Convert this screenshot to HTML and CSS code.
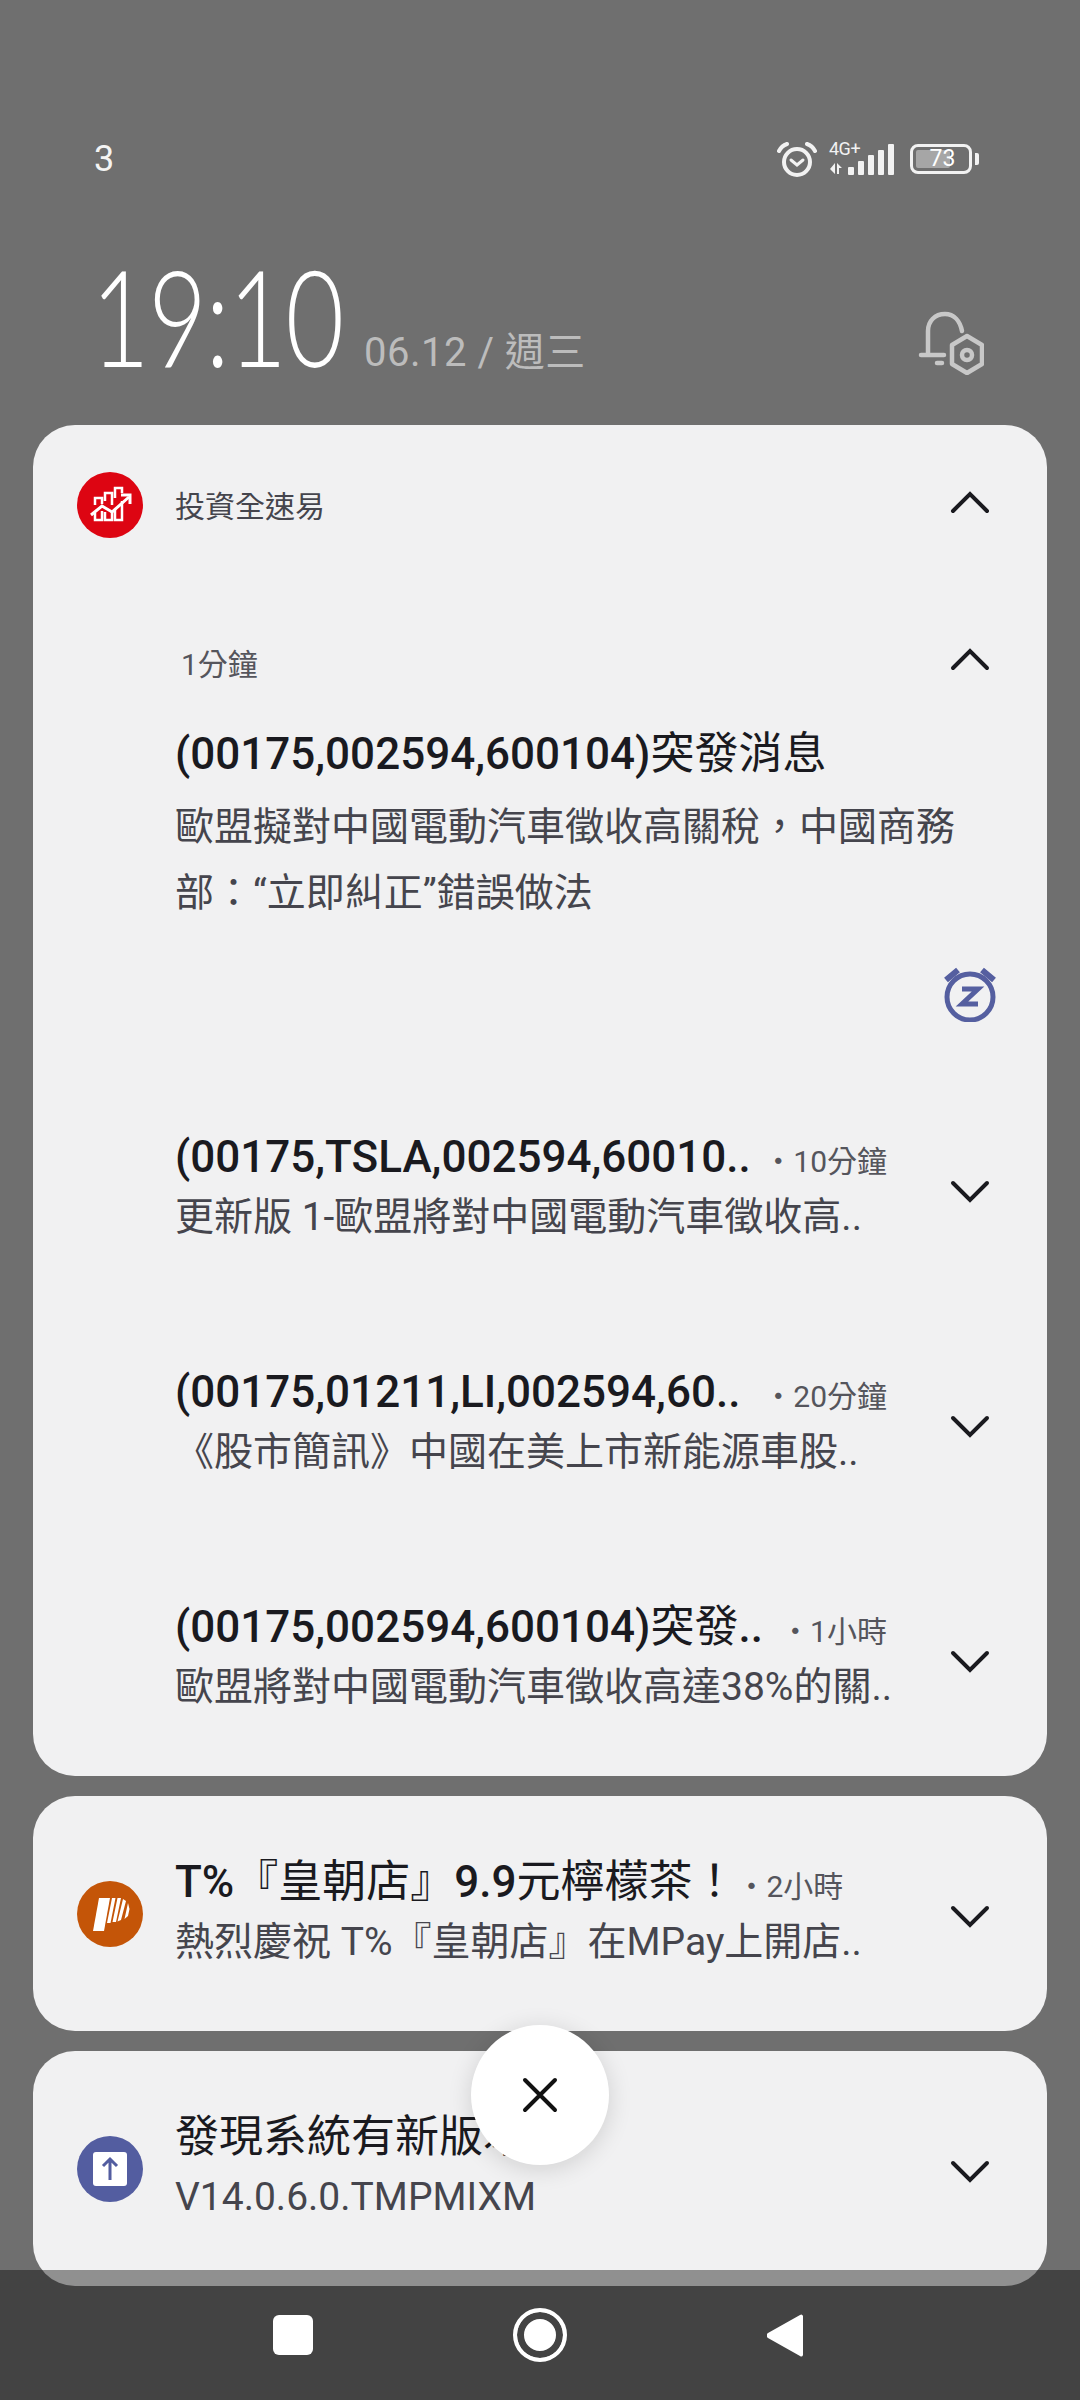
FILE: index.html
```html
<!DOCTYPE html>
<html lang="zh-Hant">
<head>
    <meta charset="UTF-8">
    <title>Notifications</title>
    <link rel="stylesheet" href="styles.css">
</head>
<body>
<div id="shade">
    <div id="statusbar">
        <span class="carrier">3</span>
        <div class="status-icons">
            <svg width="40" height="36" viewBox="0 0 40 36" fill="none" stroke="#f2f2f2" stroke-linecap="round">
                <circle cx="20" cy="21" r="13" stroke-width="4"/>
                <path d="M14 19l6 5 6-5" stroke-width="3"/>
                <path d="M2 10c2-4 5-6 8-7M38 10c-2-4-5-6-8-7" stroke-width="4"/>
            </svg>
            <div class="network">
                <span class="net-label">4G+</span>
                <svg width="66" height="31" viewBox="0 0 66 31" fill="#f2f2f2">
                    <path d="M6 19v11L1 25zM8 19l5 5h-3v6H8z"/>
                    <rect x="19" y="23" width="6" height="8" rx="1"/>
                    <rect x="29" y="17" width="6" height="14" rx="1"/>
                    <rect x="39" y="11" width="6" height="20" rx="1"/>
                    <rect x="49" y="6" width="6" height="25" rx="1"/>
                    <rect x="59" y="0" width="6" height="31" rx="1"/>
                </svg>
            </div>
            <div class="battery">
                <div class="battery-box">
                    <div class="battery-fill"></div>
                    <span class="battery-num">73</span>
                </div>
                <div class="battery-cap"></div>
            </div>
        </div>
    </div>

    <div id="clockrow">
        <div class="clock-box"><span class="clock">19:10</span></div>
        <span class="date">06.12 / 週三</span>
        <svg class="bell" width="66" height="64" viewBox="0 0 66 64" fill="none" stroke="#c8c8c8" stroke-width="4.5" stroke-linecap="round" stroke-linejoin="round">
            <path d="M10 43V20C10 10 17 3 27 3c9 0 15 7 17 17"/>
            <path d="M3 44h23M19 52h5"/>
            <path d="M49 25l15 9v19l-15 9-15-9V34z"/>
            <circle cx="49" cy="44" r="5"/>
        </svg>
    </div>

    <div class="card card-main">
        <div class="app-row">
            <svg class="app-icon" width="66" height="66" viewBox="0 0 66 66">
                <circle cx="33" cy="33" r="33" fill="#dd0512"/>
                <g fill="none" stroke="#fff" stroke-width="2.5">
                    <path d="M18 33v-7h7v6M28 29v-8h7v12M38 26V16h7v5M18 41v7h7v-9M28 40v8h7v-8M38 37v11h7V29"/>
                    <path d="M14 43l11-9 10 6 17-15" stroke-width="3"/>
                    <path d="M44 23h9v9" stroke-width="3"/>
                </g>
            </svg>
            <span class="app-name">投資全速易</span>
            <svg class="chev chev-up" width="40" height="24" viewBox="0 0 40 24"><path d="M3 21L20 4l17 17"/></svg>
        </div>

        <div class="open-item">
            <div class="open-time">
                <span>1分鐘</span>
                <svg class="chev chev-up" width="40" height="24" viewBox="0 0 40 24"><path d="M3 21L20 4l17 17"/></svg>
            </div>
            <div class="open-title">(00175,002594,600104)<span class="cjk">突發消息</span></div>
            <p class="open-body">歐盟擬對中國電動汽車徵收高關稅，中國商務部：“立即糾正”錯誤做法</p>
            <div class="snooze-row">
                <svg width="54" height="56" viewBox="0 0 54 56" fill="none" stroke="#555fa0">
                    <circle cx="27" cy="31" r="23" stroke-width="5"/>
                    <path d="M3 14L15 4M51 14L39 4" stroke-width="6"/>
                    <path d="M19 23h16L19 38h16" stroke-width="5"/>
                </svg>
            </div>
        </div>

        <div class="item">
            <div class="item-text">
                <div class="item-head"><span class="item-title">(00175,TSLA,002594,60010..</span><span class="item-time">・10分鐘</span></div>
                <div class="item-body">更新版 1-歐盟將對中國電動汽車徵收高..</div>
            </div>
            <svg class="chev" width="40" height="24" viewBox="0 0 40 24"><path d="M3 3l17 17L37 3"/></svg>
        </div>
        <div class="item">
            <div class="item-text">
                <div class="item-head"><span class="item-title">(00175,01211,LI,002594,60..</span><span class="item-time">・20分鐘</span></div>
                <div class="item-body">《股市簡訊》中國在美上市新能源車股..</div>
            </div>
            <svg class="chev" width="40" height="24" viewBox="0 0 40 24"><path d="M3 3l17 17L37 3"/></svg>
        </div>
        <div class="item">
            <div class="item-text">
                <div class="item-head"><span class="item-title">(00175,002594,600104)<span class="cjk">突發</span>..</span><span class="item-time">・1小時</span></div>
                <div class="item-body">歐盟將對中國電動汽車徵收高達38%的關..</div>
            </div>
            <svg class="chev" width="40" height="24" viewBox="0 0 40 24"><path d="M3 3l17 17L37 3"/></svg>
        </div>
    </div>

    <div class="card card-small">
        <svg class="app-icon" width="66" height="66" viewBox="0 0 66 66">
            <circle cx="33" cy="33" r="33" fill="#c45508"/>
            <path d="M22 17h11l-6 33H16z" fill="#fff"/>
            <path d="M35 17h3.5l-5 25H30zM40.500 17H44l-5 24h-3.500zM46 18l3 2-5 19-3.500 1.500zM51 22l1.500 6-1.500 7-3.500 3z" fill="#fff"/>
        </svg>
        <div class="item-text">
            <div class="item-head"><span class="item-title">T%<span class="cjk">『皇朝店』</span>9.9<span class="cjk">元檸檬茶！</span></span><span class="item-time">・2小時</span></div>
            <div class="item-body">熱烈慶祝 T%『皇朝店』在MPay上開店..</div>
        </div>
        <svg class="chev" width="40" height="24" viewBox="0 0 40 24"><path d="M3 3l17 17L37 3"/></svg>
    </div>

    <div class="card card-small">
        <svg class="app-icon" width="66" height="66" viewBox="0 0 66 66">
            <circle cx="33" cy="33" r="33" fill="#535da0"/>
            <rect x="16" y="16" width="34" height="34" rx="3" fill="#fff"/>
            <path d="M33 44V23M26 30l7-7 7 7" fill="none" stroke="#535da0" stroke-width="3"/>
        </svg>
        <div class="item-text">
            <div class="item-title item-title-plain">發現系統有新版本</div>
            <div class="item-body">V14.0.6.0.TMPMIXM</div>
        </div>
        <svg class="chev" width="40" height="24" viewBox="0 0 40 24"><path d="M3 3l17 17L37 3"/></svg>
    </div>

    <div id="clearall">
        <svg width="36" height="36" viewBox="0 0 36 36"><path d="M3 3l30 30M33 3L3 33" stroke="#111" stroke-width="4" stroke-linecap="round"/></svg>
    </div>

    <div id="navbar">
        <div class="nav-square"></div>
        <div class="nav-circle"></div>
        <svg width="36" height="45" viewBox="0 0 36 45"><path d="M36 3v39a2 2 0 0 1-3 1L1 25a3 3 0 0 1 0-5L33 2a2 2 0 0 1 3 1z" fill="#fff"/></svg>
    </div>
</div>
</body>
</html>
```

FILE: styles.css
```css
html, body {
    margin: 0;
    padding: 0;
}
body {
    font-family: "Roboto", "Noto Sans CJK TC", sans-serif;
    background-color: #6f6f6f;
}
#shade {
    position: relative;
    width: 1080px;
    height: 2400px;
    overflow: hidden;
    background-color: #6f6f6f;
    padding: 0 33px;
    box-sizing: border-box;
}
#statusbar {
    height: 186px;
    display: flex;
    align-items: center;
    justify-content: space-between;
    padding: 132px 68px 0 61px;
    box-sizing: border-box;
}
.carrier {
    color: #f4f4f4;
    font-size: 36px;
    line-height: 54px;
}
.status-icons {
    display: flex;
    align-items: center;
    gap: 12px;
}
.network {
    position: relative;
    width: 66px;
    height: 31px;
}
.net-label {
    position: absolute;
    left: 0;
    top: -3px;
    color: #f2f2f2;
    font-size: 18px;
    line-height: 16px;
    letter-spacing: -0.5px;
}
.battery {
    display: flex;
    align-items: center;
    gap: 3px;
    margin-left: 3px;
}
.battery-box {
    position: relative;
    width: 62px;
    height: 30px;
    box-sizing: border-box;
    border: 3px solid #f2f2f2;
    border-radius: 8px;
    display: flex;
    align-items: center;
    justify-content: center;
}
.battery-fill {
    position: absolute;
    left: 3px;
    top: 3px;
    bottom: 3px;
    width: 34px;
    background-color: #a6a6a6;
    border-radius: 2px;
}
.battery-num {
    position: relative;
    color: #fff;
    font-size: 23px;
    line-height: 24px;
    margin-left: 3px;
}
.battery-cap {
    width: 4px;
    height: 12px;
    background-color: #f2f2f2;
    border-radius: 0 2px 2px 0;
}
#clockrow {
    height: 239px;
    display: flex;
    align-items: flex-start;
    padding-left: 58px;
    padding-right: 63px;
    box-sizing: border-box;
}
.clock-box {
    width: 243px;
    flex: none;
    margin-top: 62px;
}
.clock {
    display: inline-block;
    color: #fff;
    font-family: "Lato", "Roboto", sans-serif;
    font-weight: 300;
    font-size: 135px;
    line-height: 135px;
    letter-spacing: -2px;
    transform: scaleX(0.75);
    transform-origin: left center;
}
.date {
    color: #bcbcbc;
    font-size: 40px;
    line-height: 50px;
    letter-spacing: 0.5px;
    margin-top: 142px;
    margin-left: 30px;
    flex: 1;
}
.bell {
    margin-top: 125px;
}
.card {
    background-color: #f1f1f2;
    border-radius: 42px;
    margin-bottom: 20px;
}
.chev {
    flex: none;
    fill: none;
    stroke: #1a1a1f;
    stroke-width: 4;
    stroke-linecap: round;
    margin-top: 6px;
}
.chev-up {
    margin-top: 0;
    margin-bottom: 6px;
}
.cjk {
    font-weight: 400;
}
.card-main {
    height: 1351px;
    box-sizing: border-box;
    padding: 47px 57px 0 44px;
}
.app-row {
    display: flex;
    align-items: center;
    height: 66px;
}
.app-icon {
    flex: none;
}
.app-name {
    flex: 1;
    margin-left: 32px;
    padding-bottom: 2px;
    color: #45454d;
    font-size: 30px;
}
.open-item {
    padding-left: 98px;
}
.open-time {
    display: flex;
    align-items: center;
    justify-content: space-between;
    margin-top: 104px;
    height: 40px;
    padding-left: 6px;
    color: #55555c;
    font-size: 30px;
}
.open-title {
    margin-top: 41px;
    color: #1a1a1f;
    font-size: 44px;
    line-height: 62px;
    font-weight: 500;
}
.open-body {
    margin: 9px 0 0;
    width: 800px;
    color: #45454d;
    font-size: 39px;
    line-height: 66px;
}
.snooze-row {
    display: flex;
    justify-content: flex-end;
    margin-top: 40px;
    margin-right: -7px;
    margin-bottom: 49px;
    height: 56px;
}
.item {
    display: flex;
    align-items: center;
    height: 235px;
    margin-left: 98px;
}
.item-text {
    flex: 1;
    min-width: 0;
    padding-bottom: 3px;
}
.item-head {
    display: flex;
    align-items: baseline;
    white-space: nowrap;
}
.item .item-head {
    width: 712px;
    justify-content: space-between;
}
.item-title {
    color: #1a1a1f;
    font-size: 44px;
    line-height: 58px;
    font-weight: 500;
}
.item-title-plain {
    font-weight: 400;
}
.item-time {
    color: #55555c;
    font-size: 30px;
}
.item-body {
    margin-top: 2px;
    color: #45454d;
    font-size: 39px;
    line-height: 58px;
    white-space: nowrap;
}
.card-small {
    height: 235px;
    display: flex;
    align-items: center;
    padding: 0 57px 0 44px;
    box-sizing: border-box;
}
.card-small .item-text {
    margin-left: 32px;
}
#clearall {
    position: absolute;
    left: 471px;
    top: 2025px;
    width: 138px;
    height: 140px;
    border-radius: 50%;
    background-color: #fff;
    box-shadow: 0 4px 24px rgba(0, 0, 0, 0.14);
    display: flex;
    align-items: center;
    justify-content: center;
}
#navbar {
    position: absolute;
    left: 0;
    right: 0;
    top: 2270px;
    height: 130px;
    background-color: rgba(4, 4, 4, 0.41);
    display: flex;
    align-items: center;
    justify-content: center;
    gap: 200px;
    box-sizing: border-box;
    padding-right: 4px;
}
.nav-square {
    width: 40px;
    height: 40px;
    background-color: #fff;
    border-radius: 6px;
}
.nav-circle {
    width: 54px;
    height: 54px;
    box-sizing: border-box;
    border-radius: 50%;
    background-color: #fff;
    border: 4px solid #fff;
    box-shadow: inset 0 0 0 7px #434343;
}
```
